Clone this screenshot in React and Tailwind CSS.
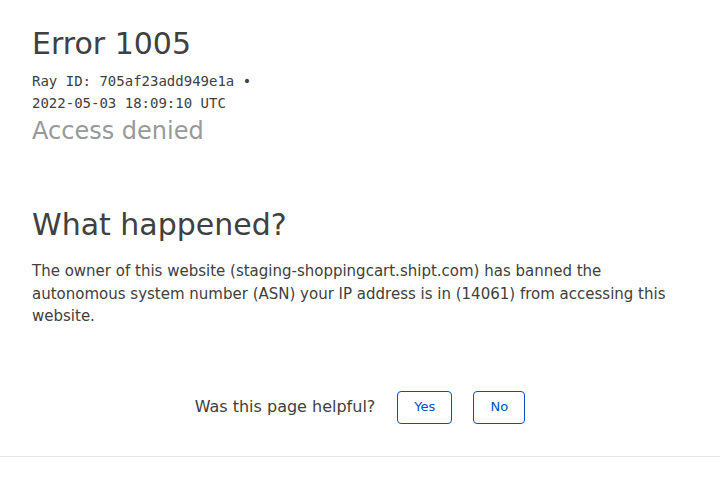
import React from 'react';

const App = () => {
  return (
    <div className="w-[720px] h-[480px] bg-white overflow-hidden text-[#404040]" style={{ fontFamily: '"DejaVu Sans", sans-serif' }}>
      <div className="px-8 pt-[24px]">
        <h1 className="text-[30px] leading-[40px] font-normal">Error 1005</h1>
        <div className="mt-[6px] text-[14px] leading-[22px] font-['DejaVu_Sans_Mono',monospace]">
          <div>Ray ID: 705af23add949e1a •</div>
          <div>2022-05-03 18:09:10 UTC</div>
        </div>
        <h2 className="text-[24px] leading-[32px] text-[#999999] mt-[1px]">Access denied</h2>
      </div>

      <div className="px-8 pt-[58px]">
        <h2 className="text-[30px] leading-[40px]">What happened?</h2>
        <p className="mt-[15px] text-[15px] leading-[22.5px]">
          The owner of this website (staging-shoppingcart.shipt.com) has banned the autonomous system number (ASN) your IP address is in (14061) from accessing this website.
        </p>
      </div>

      <div className="flex items-center justify-center mt-[63px] text-[16px]">
        <span>Was this page helpful?</span>
        <button className="ml-[22px] w-[55px] h-[33px] border border-[#0051c3] rounded text-[#0051c3] text-[13px]">Yes</button>
        <button className="ml-[21px] w-[52px] h-[33px] border border-[#0051c3] rounded text-[#0051c3] text-[13px]">No</button>
      </div>

      <div className="mt-[32px] border-t border-[#e5e5e5]"></div>
    </div>
  );
};

export default App;
